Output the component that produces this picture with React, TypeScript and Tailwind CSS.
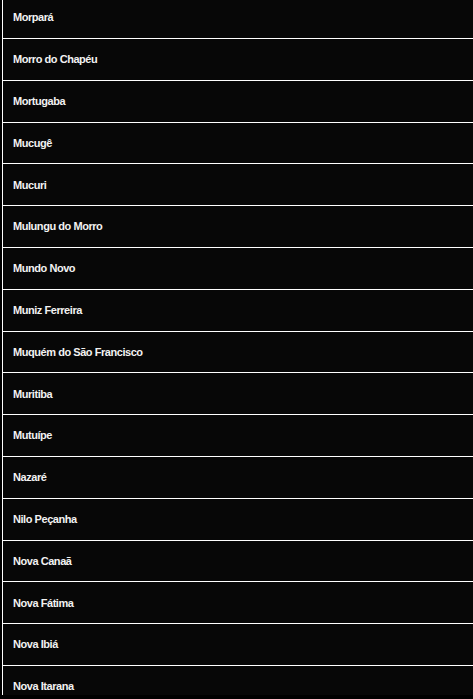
import React from "react"

const cities = [
  "Morpará",
  "Morro do Chapéu",
  "Mortugaba",
  "Mucugê",
  "Mucuri",
  "Mulungu do Morro",
  "Mundo Novo",
  "Muniz Ferreira",
  "Muquém do São Francisco",
  "Muritiba",
  "Mutuípe",
  "Nazaré",
  "Nilo Peçanha",
  "Nova Canaã",
  "Nova Fátima",
  "Nova Ibiá",
  "Nova Itarana",
]

export default function App() {
  return (
    <div className="h-[699px] w-full overflow-hidden bg-black font-['Liberation_Sans',Arial,sans-serif]">
      <div className="ml-[2px] h-[695px] overflow-hidden border-l border-white">
        <ul className="-mt-[2.8px]">
          {cities.map((city) => (
            <li
              key={city}
              className="flex h-[41.8px] items-center border-b border-white bg-[#070707] pl-[10px] text-[11px] font-bold tracking-[-0.45px] text-[#f2f2f2]"
            >
              {city}
            </li>
          ))}
        </ul>
      </div>
    </div>
  )
}
